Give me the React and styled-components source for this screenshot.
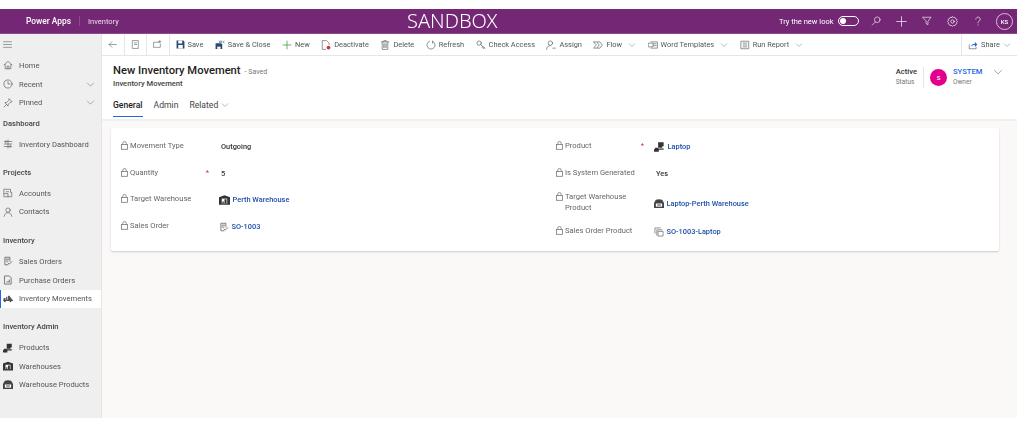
import React from 'react';
import styled, { createGlobalStyle } from 'styled-components';

const GlobalStyle = createGlobalStyle`
  html, body { margin: 0; padding: 0; background: #fff; }
  body { font-family: Roboto, "Open Sans", "Liberation Sans", sans-serif; }
  * { box-sizing: border-box; }
`;

const Page = styled.div`
  width: 1017px;
  height: 409px;
  margin-top: 9px;
  display: flex;
  flex-direction: column;
  filter: blur(0.3px);
`;

const Header = styled.header`
  height: 25px;
  flex: none;
  background: #742774;
  border-bottom: 1px solid #8d4a8d;
  color: #fff;
  display: grid;
  grid-template-columns: 407px auto 1fr;
  align-items: center;
`;

const Brand = styled.div`
  display: flex;
  align-items: center;
  padding-left: 26px;
`;

const BrandName = styled.span`
  font-size: 8.4px;
  font-weight: 500;
  padding-right: 8px;
  border-right: 1px solid #8d4a8d;
`;

const AppName = styled.span`
  font-size: 7.5px;
  padding-left: 8px;
  color: #eadcea;
`;

const Sandbox = styled.div`
  font-family: "Noto Sans", sans-serif;
  font-size: 20px;
  font-weight: 300;
  line-height: 24px;
`;

const HeaderTools = styled.div`
  display: flex;
  align-items: center;
  justify-content: flex-end;
  padding-right: 4px;
`;

const TryText = styled.span`
  font-size: 7.5px;
  margin-right: 4px;
`;

const Toggle = styled.span`
  width: 21px;
  height: 10px;
  border: 1px solid #fff;
  border-radius: 5px;
  display: flex;
  align-items: center;
  padding-left: 1px;
  margin-right: 5px;
  &::before {
    content: '';
    width: 6px;
    height: 6px;
    border-radius: 50%;
    background: #fff;
  }
`;

const HeadIcon = styled.span`
  width: 25.5px;
  height: 20px;
  display: flex;
  align-items: center;
  justify-content: center;
`;

const Avatar = styled.span`
  width: 17px;
  height: 17px;
  margin-left: 5px;
  border: 1px solid #d9bfd9;
  border-radius: 50%;
  font-size: 6px;
  font-weight: 500;
  display: flex;
  align-items: center;
  justify-content: center;
`;

const Main = styled.div`
  flex: 1;
  display: flex;
  min-height: 0;
`;

const Sidebar = styled.nav`
  width: 102px;
  flex: none;
  background: #efefef;
  border-right: 1px solid #e6e6e6;
  color: #555;
`;

const Burger = styled.div`
  height: 21px;
  margin-bottom: 1px;
  display: flex;
  align-items: center;
  padding-left: 3px;
`;

const NavRow = styled.div`
  height: 18.7px;
  display: flex;
  align-items: center;
  padding-left: 3px;
  padding-right: 6px;
  font-size: 7.6px;
  background: ${p => (p.$active ? '#fff' : 'transparent')};
  box-shadow: ${p => (p.$active ? 'inset 1px 0 0 #2266e3' : 'none')};
`;

const NavIcon = styled.span`
  width: 10px;
  height: 10px;
  margin-right: 6px;
  display: flex;
  align-items: center;
  justify-content: center;
  color: #555;
`;

const NavLabel = styled.span`
  flex: 1;
  white-space: nowrap;
`;

const GroupTitle = styled.div`
  font-size: 7.6px;
  font-weight: 500;
  color: #444;
  padding-left: 3px;
  height: 14px;
  line-height: 14px;
  margin-top: ${p => p.$top}px;
  margin-bottom: 4px;
`;

const Content = styled.div`
  flex: 1;
  min-width: 0;
  display: flex;
  flex-direction: column;
  background: #faf9f8;
`;

const CommandBar = styled.div`
  height: 22px;
  flex: none;
  background: #fff;
  border-bottom: 1px solid #e6e6e6;
  display: flex;
  align-items: center;
  color: #555;
`;

const NavButton = styled.div`
  width: 22.5px;
  height: 21px;
  display: flex;
  align-items: center;
  justify-content: center;
  border-right: 1px solid #e6e6e6;
`;

const Commands = styled.div`
  flex: 1;
  display: flex;
  align-items: center;
  padding-left: 6px;
  gap: 11.5px;
`;

const Command = styled.div`
  display: flex;
  align-items: center;
  gap: 3px;
  font-size: 7.4px;
  white-space: nowrap;
`;

const MoreChevron = styled.span`
  display: flex;
  margin-left: 3px;
`;

const ShareBox = styled.div`
  width: 56px;
  height: 21px;
  border-left: 1px solid #e6e6e6;
  display: flex;
  align-items: center;
  padding-left: 6px;
  gap: 3px;
  font-size: 7.4px;
`;

const FormHeader = styled.div`
  height: 63px;
  flex: none;
  background: #fff;
  padding: 8px 14px 0 11px;
  display: grid;
  grid-template-columns: 1fr auto;
  grid-template-rows: 28px 1fr;
`;

const TitleBlock = styled.div``;

const TitleRow = styled.div`
  display: flex;
  align-items: baseline;
  gap: 4px;
  height: 14px;
`;

const Title = styled.h1`
  margin: 0;
  font-size: 11.2px;
  font-weight: 500;
  line-height: 14px;
  color: #222;
`;

const Saved = styled.span`
  font-size: 7px;
  color: #777;
`;

const Entity = styled.div`
  font-size: 7.6px;
  font-weight: 500;
  color: #444;
  line-height: 11px;
`;

const HeaderFields = styled.div`
  display: flex;
  align-items: flex-start;
  padding-top: 3px;
`;

const StatusBlock = styled.div`
  padding-right: 6px;
  border-right: 1px solid #e6e6e6;
  height: 21px;
  margin-right: 6px;
`;

const FieldValue = styled.div`
  font-size: 7.6px;
  font-weight: 500;
  color: ${p => (p.$link ? '#2266e3' : '#333')};
  line-height: 10px;
`;

const FieldHint = styled.div`
  font-size: 6.5px;
  color: #777;
  line-height: 10px;
`;

const OwnerAvatar = styled.span`
  width: 17px;
  height: 17px;
  border-radius: 50%;
  background: #e3008c;
  color: #fff;
  font-size: 6px;
  font-weight: 500;
  display: flex;
  align-items: center;
  justify-content: center;
  margin: 2px 6px 0 0;
`;

const OwnerBlock = styled.div`
  width: 40px;
`;

const Tabs = styled.div`
  grid-column: 1 / 3;
  display: flex;
  align-items: flex-start;
  gap: 11px;
  padding-top: 6px;
`;

const Tab = styled.div`
  display: flex;
  align-items: center;
  gap: 3px;
  height: 19px;
  padding-bottom: 4px;
  font-size: 8.6px;
  font-weight: ${p => (p.$active ? 500 : 400)};
  color: ${p => (p.$active ? '#222' : '#444')};
  border-bottom: ${p => (p.$active ? '1px solid #2266e3' : '1px solid transparent')};
`;

const Divider = styled.div`
  height: 2px;
  flex: none;
  background: #f1f0ef;
`;

const Card = styled.section`
  margin: 7px 18px 0 9px;
  height: 123px;
  background: #fff;
  border-radius: 2px;
  box-shadow: 0 1px 2px rgba(0, 0, 0, 0.18);
  display: grid;
  grid-template-columns: 435px 1fr;
  padding: 12px 0 0 10px;
`;

const Column = styled.div`
  display: flex;
  flex-direction: column;
`;

const FormRow = styled.div`
  min-height: ${p => p.$h}px;
  display: grid;
  grid-template-columns: 98px 1fr;
  align-items: flex-start;
`;

const LabelWrap = styled.div`
  position: relative;
  display: flex;
  gap: 2px;
  font-size: 7.6px;
  line-height: 11px;
  color: #666;
  width: 88px;
`;

const Required = styled.span`
  position: absolute;
  right: 0;
  top: 0;
  color: #d13438;
`;

const Value = styled.div`
  display: flex;
  align-items: center;
  gap: 2.5px;
  font-size: 7.4px;
  font-weight: 500;
  line-height: 11px;
  padding-top: ${p => p.$top || 1}px;
  padding-left: ${p => (p.$plain ? 2 : 0)}px;
  color: ${p => (p.$link ? '#1f4fa8' : '#333')};
`;

const ValueIcon = styled.span`
  display: flex;
  align-items: center;
  color: #555;
`;

const Svg = ({ s = 10, w = 1, children, vb = 16 }) => (
  <svg width={s} height={s} viewBox={`0 0 ${vb} ${vb}`} fill="none" stroke="currentColor" strokeWidth={w} strokeLinecap="round" strokeLinejoin="round">
    {children}
  </svg>
);

const Chevron = ({ s = 8, color = '#888' }) => (
  <svg width={s} height={s} viewBox="0 0 16 16" fill="none" stroke={color} strokeWidth="1.2">
    <path d="M2 5l6 6 6-6" />
  </svg>
);

const LockIcon = () => (
  <svg width="7" height="9" viewBox="0 0 7 9" fill="none" stroke="#777" strokeWidth="0.8" style={{ flex: 'none', marginTop: 1 }}>
    <rect x="0.5" y="3.5" width="6" height="4.8" />
    <path d="M1.8 3.5V2.2a1.7 1.7 0 0 1 3.4 0v1.3" />
  </svg>
);

const icons = {
  home: <Svg><path d="M1.5 8L8 2l6.5 6M3.5 7v7h9V7M6.5 14v-4h3v4" /></Svg>,
  recent: <Svg><circle cx="8" cy="8" r="6.5" /><path d="M8 4v4h3.5" /></Svg>,
  pin: <Svg><path d="M10 1.5l4.5 4.5-3 1-3 3-.5 3L3 7.5l3-.5 3-3zM5.5 10.5L1.500 14.500" /></Svg>,
  dash: <Svg><path d="M8 1.500v13M2 4h12M2 8h12M2 12h12M4.500 2.500v4M11.500 9.500v4" /></Svg>,
  account: <Svg><path d="M2 2h10v5h2v7H2zM2 9h6v5M5 6h4" /></Svg>,
  contact: <Svg><circle cx="8" cy="5" r="3.500" /><path d="M2 15c.5-4 3-6 6-6s5.500 2 6 6" /></Svg>,
  order: <Svg w={1.2}><path d="M11 8V2H3v12h5M5 5h4M5 8h3M8 11l2 2 4-4" /></Svg>,
  purchase: <Svg w={1.2}><path d="M3 1.500h7l3 3v10H3zM6 11h4M10 8v3" /></Svg>,
  move: (
    <svg width="11" height="9" viewBox="0 0 16 12" fill="#555">
      <path d="M0 8h16v2H0zM1 5h3v3H1zM5 3h2v5H5zM8 2l2-1 2 3 3 4H8z" />
      <circle cx="3" cy="10.500" r="1.500" />
      <circle cx="12" cy="10.500" r="1.500" />
    </svg>
  ),
  product: (
    <svg width="11" height="10" viewBox="0 0 16 14" fill="#333">
      <path d="M6 0h8v6h-2v2H6zM2 8h4v1h8v2H7v3H0v-3z" />
    </svg>
  ),
  warehouse: (
    <svg width="11" height="10" viewBox="0 0 16 14" fill="#333">
      <path d="M0 3l8-3 8 3v11H0z" />
      <path d="M4 5h8v7H4z" fill="#fff" />
      <path d="M8 6h3v6H8zM5 9h2v3H5z" />
    </svg>
  ),
  whProduct: (
    <svg width="10" height="9" viewBox="0 0 16 14" fill="#444">
      <path d="M0 6l3-5q5-2 10 0l3 5v8H0z" />
      <path d="M3 7h10v5H3z" fill="#fff" />
      <path d="M5 8h6v1H5zM5 10h6v1H5z" />
    </svg>
  ),
  copies: <Svg><path d="M1.500 10V1.500H10M4.500 13V4.500H13" /><path d="M7 7h7.500v7.500H7z" /></Svg>,
  formOrder: <Svg s={10} w={1.2}><path d="M11 8V2H3v12h5M5 5h4M5 8h3M8 11l2 2 4-4" /></Svg>,
};

const cmd = {
  save: (
    <svg width="9" height="9" viewBox="0 0 16 16" fill="#2b4a6f">
      <path d="M1 1h12l2 2v12H1z" />
      <path d="M4 1h7v5H4zM4 9h8v6H4z" fill="#fff" />
    </svg>
  ),
  saveClose: (
    <svg width="10" height="10" viewBox="0 0 18 16" fill="#2b4a6f">
      <path d="M1 5h10l2 2v8H1z" />
      <path d="M4 11h6v4H4z" fill="#fff" />
      <path d="M8 1h4v3H8zM14 1l3 3M17 1l-3 3" stroke="#2b4a6f" fill="none" />
    </svg>
  ),
  plus: (
    <svg width="10" height="10" viewBox="0 0 16 16" stroke="#3c9a3c" strokeWidth="1.2">
      <path d="M8 1v14M1 8h14" />
    </svg>
  ),
  deactivate: (
    <svg width="10" height="10" viewBox="0 0 16 16" fill="none" stroke="#555">
      <path d="M2 1h7l4 4v3M2 1v14h6" />
      <circle cx="12" cy="12" r="3" fill="#d13438" stroke="none" />
    </svg>
  ),
  del: <Svg><path d="M2 3h12M3.500 3v12h9V3M6 3V1h4v2M6 6v6M8 6v6M10 6v6" /></Svg>,
  refresh: <Svg><path d="M5.500 2a6.500 6.500 0 1 0 5 0M10.500 2V5" /></Svg>,
  access: <Svg><circle cx="5" cy="5" r="3.500" /><path d="M7.500 7.500l7 6M11 10.500l-1.500 2M13 12l-1.500 2" /></Svg>,
  assign: <Svg><circle cx="7" cy="5" r="3.500" /><path d="M1 15c0-4 2.500-6 6-6M11 13h4" /></Svg>,
  flow: <Svg><path d="M1 3h5l4 5-4 5H1l4-5zM7 3h4l4 5-4 5H7" /></Svg>,
  word: <Svg><path d="M5 3h10v10H5M1 5h7v6H1zM9 6h4M9 9h4" /></Svg>,
  report: <Svg><path d="M2 2h12v12H2zM5 5h6M5 8h6M5 11h6" /></Svg>,
  share: (
    <svg width="10" height="10" viewBox="0 0 16 16" fill="none" stroke="#555">
      <path d="M2 7v7h11v-3" />
      <path d="M5 11c0-4 3-5 6-5V3l4 4-4 4V8c-3 0-5 1-6 3z" fill="#2266e3" stroke="none" />
    </svg>
  ),
};

const commands = [
  { label: 'Save', icon: cmd.save },
  { label: 'Save & Close', icon: cmd.saveClose },
  { label: 'New', icon: cmd.plus },
  { label: 'Deactivate', icon: cmd.deactivate },
  { label: 'Delete', icon: cmd.del },
  { label: 'Refresh', icon: cmd.refresh },
  { label: 'Check Access', icon: cmd.access },
  { label: 'Assign', icon: cmd.assign },
  { label: 'Flow', icon: cmd.flow, more: true },
  { label: 'Word Templates', icon: cmd.word, more: true },
  { label: 'Run Report', icon: cmd.report, more: true },
];

const leftFields = [
  { label: 'Movement Type', value: 'Outgoing', h: 26.7 },
  { label: 'Quantity', value: '5', required: true, h: 26.7 },
  { label: 'Target Warehouse', value: 'Perth Warehouse', icon: icons.warehouse, link: true, h: 26.7 },
  { label: 'Sales Order', value: 'SO-1003', icon: icons.formOrder, link: true, h: 26.7 },
];

const rightFields = [
  { label: 'Product', value: 'Laptop', icon: icons.product, link: true, required: true, h: 27 },
  { label: 'Is System Generated', value: 'Yes', h: 24 },
  { label: 'Target Warehouse Product', value: 'Laptop-Perth Warehouse', icon: icons.whProduct, link: true, h: 34, top: 7 },
  { label: 'Sales Order Product', value: 'SO-1003-Laptop', icon: icons.copies, link: true, h: 27 },
];

const Field = ({ f }) => (
  <FormRow $h={f.h}>
    <LabelWrap>
      <LockIcon />
      <span>{f.label}</span>
      {f.required && <Required>*</Required>}
    </LabelWrap>
    <Value $link={f.link} $top={f.top} $plain={!f.icon}>
      {f.icon && <ValueIcon>{f.icon}</ValueIcon>}
      {f.value}
    </Value>
  </FormRow>
);

const Nav = ({ icon, label, more, active }) => (
  <NavRow $active={active}>
    <NavIcon>{icon}</NavIcon>
    <NavLabel>{label}</NavLabel>
    {more && <Chevron s={9} />}
  </NavRow>
);

export default function App() {
  return (
    <>
      <GlobalStyle />
      <Page>
        <Header>
          <Brand>
            <BrandName>Power Apps</BrandName>
            <AppName>Inventory</AppName>
          </Brand>
          <Sandbox>SANDBOX</Sandbox>
          <HeaderTools>
            <TryText>Try the new look</TryText>
            <Toggle />
            <HeadIcon>
              <Svg><circle cx="10" cy="6" r="4.500" /><path d="M7 9.500L2 14.500" /></Svg>
            </HeadIcon>
            <HeadIcon>
              <Svg s={11}><path d="M8 1v14M1 8h14" /></Svg>
            </HeadIcon>
            <HeadIcon>
              <Svg><path d="M1.500 2h13L9.500 8.500V14l-3-2V8.500z" /></Svg>
            </HeadIcon>
            <HeadIcon>
              <Svg s={11}><circle cx="8" cy="8" r="2.500" /><path d="M8 1l1.500 1.200 2-.2 1 1.800 1.800 1-.3 2 1 1.200-1 1.200.3 2-1.800 1-1 1.800-2-.2L8 15l-1.500-1.200-2 .2-1-1.800-1.800-1 .3-2L1 8l1-1.200-.3-2 1.800-1 1-1.800 2 .2z" /></Svg>
            </HeadIcon>
            <HeadIcon>
              <Svg><path d="M4.500 5a3.500 3.500 0 1 1 5.500 3c-1.500 1-2 1.500-2 3M8 14v.5" /></Svg>
            </HeadIcon>
            <Avatar>KS</Avatar>
          </HeaderTools>
        </Header>
        <Main>
          <Sidebar>
            <Burger>
              <Svg s={9}><path d="M1 3h14M1 8h14M1 13h14" /></Svg>
            </Burger>
            <Nav icon={icons.home} label="Home" />
            <Nav icon={icons.recent} label="Recent" more />
            <Nav icon={icons.pin} label="Pinned" more />
            <GroupTitle $top={5}>Dashboard</GroupTitle>
            <Nav icon={icons.dash} label="Inventory Dashboard" />
            <GroupTitle $top={12}>Projects</GroupTitle>
            <Nav icon={icons.account} label="Accounts" />
            <Nav icon={icons.contact} label="Contacts" />
            <GroupTitle $top={13}>Inventory</GroupTitle>
            <Nav icon={icons.order} label="Sales Orders" />
            <Nav icon={icons.purchase} label="Purchase Orders" />
            <Nav icon={icons.move} label="Inventory Movements" active />
            <GroupTitle $top={12}>Inventory Admin</GroupTitle>
            <Nav icon={icons.product} label="Products" />
            <Nav icon={icons.warehouse} label="Warehouses" />
            <Nav icon={icons.whProduct} label="Warehouse Products" />
          </Sidebar>
          <Content>
            <CommandBar>
              <NavButton>
                <Svg s={9}><path d="M15 8H2M7 3L2 8l5 5" /></Svg>
              </NavButton>
              <NavButton>
                <Svg s={9}><path d="M3 1h10v14H3zM6 5h4M6 8h4" /></Svg>
              </NavButton>
              <NavButton>
                <Svg s={9}><path d="M10 4H1v9h12V7M12 1v4M10 3h4" /></Svg>
              </NavButton>
              <Commands>
                {commands.map(c => (
                  <Command key={c.label}>
                    {c.icon}
                    <span>{c.label}</span>
                    {c.more && <MoreChevron><Chevron s={8} /></MoreChevron>}
                  </Command>
                ))}
              </Commands>
              <ShareBox>
                {cmd.share}
                <span>Share</span>
                <Chevron s={8} />
              </ShareBox>
            </CommandBar>
            <FormHeader>
              <TitleBlock>
                <TitleRow>
                  <Title>New Inventory Movement</Title>
                  <Saved>- Saved</Saved>
                </TitleRow>
                <Entity>Inventory Movement</Entity>
              </TitleBlock>
              <HeaderFields>
                <StatusBlock>
                  <FieldValue>Active</FieldValue>
                  <FieldHint>Status</FieldHint>
                </StatusBlock>
                <OwnerAvatar>S</OwnerAvatar>
                <OwnerBlock>
                  <FieldValue $link>SYSTEM</FieldValue>
                  <FieldHint>Owner</FieldHint>
                </OwnerBlock>
                <Chevron s={10} />
              </HeaderFields>
              <Tabs>
                <Tab $active>General</Tab>
                <Tab>Admin</Tab>
                <Tab>Related <Chevron s={8} /></Tab>
              </Tabs>
            </FormHeader>
            <Divider />
            <Card>
              <Column>
                {leftFields.map(f => <Field key={f.label} f={f} />)}
              </Column>
              <Column>
                {rightFields.map(f => <Field key={f.label} f={f} />)}
              </Column>
            </Card>
          </Content>
        </Main>
      </Page>
    </>
  );
}
